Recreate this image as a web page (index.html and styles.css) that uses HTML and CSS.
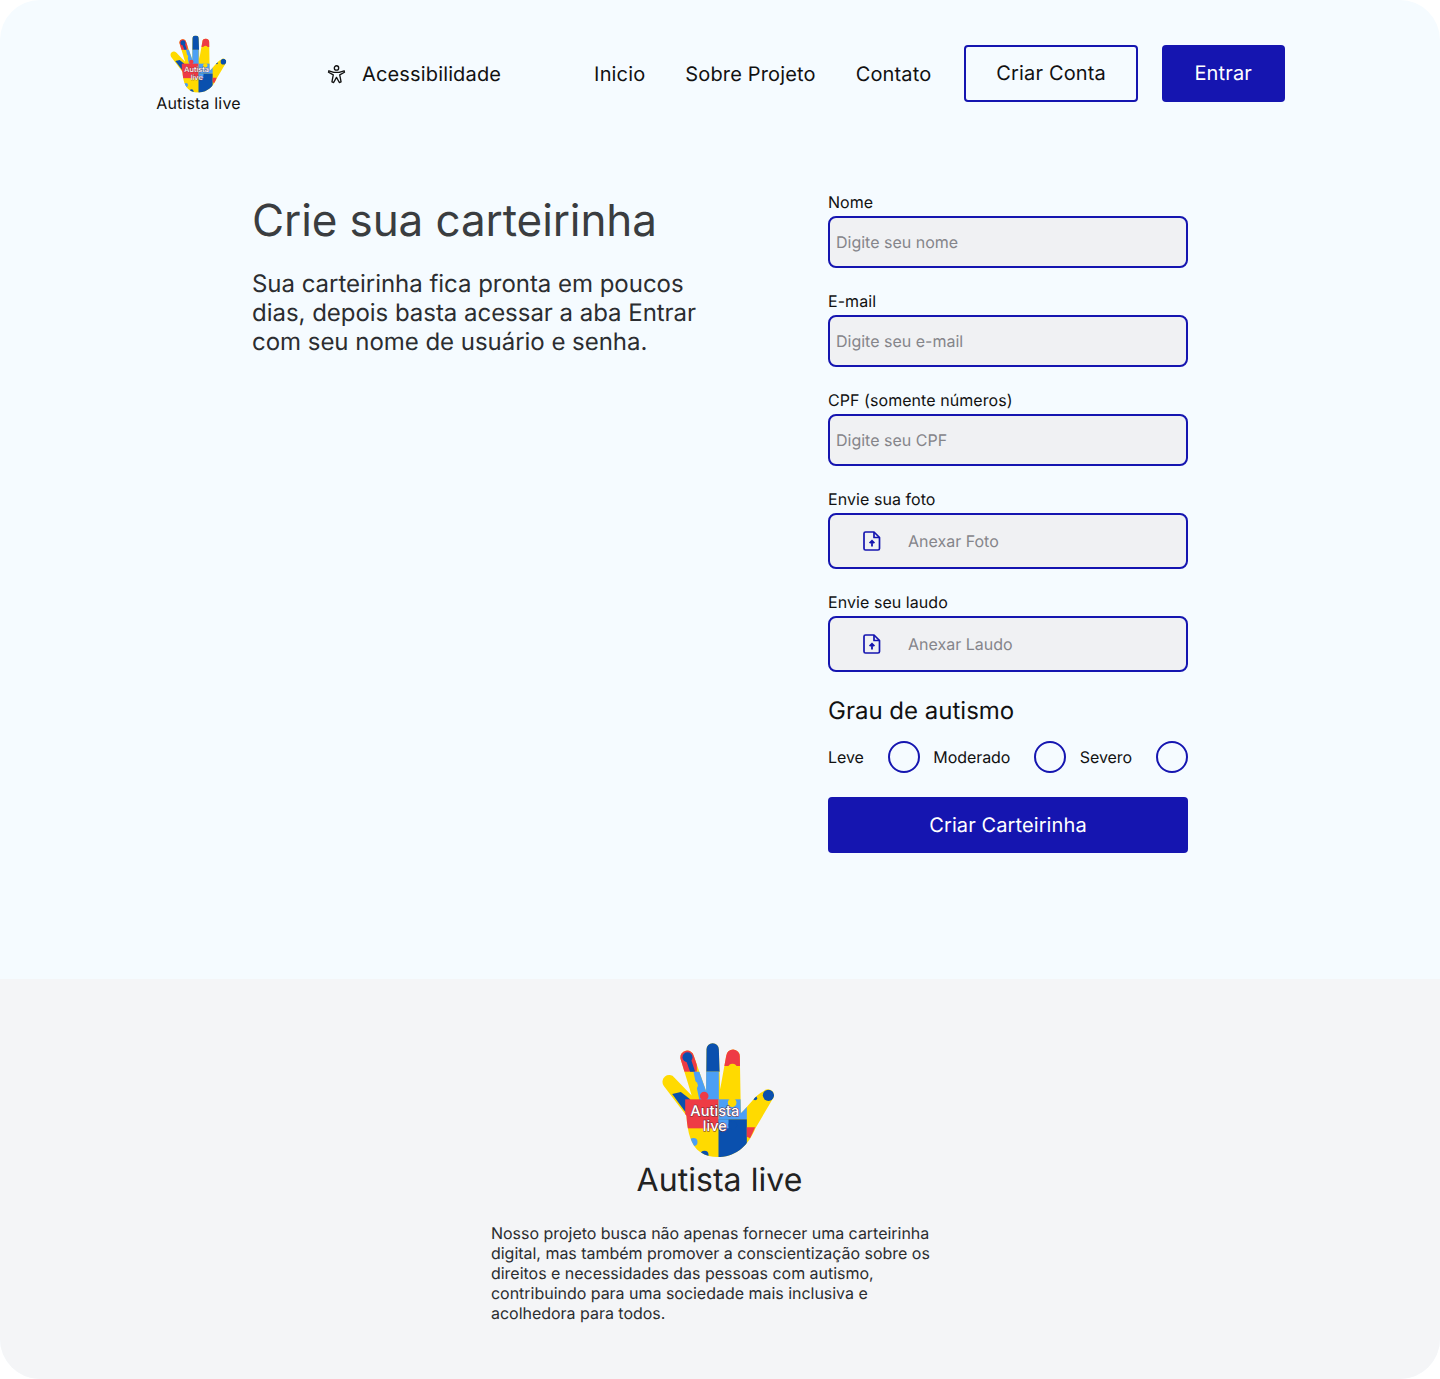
FILE: index.html
```html
<!DOCTYPE html>
<html lang="pt-BR">
<head>
<meta charset="utf-8">
<title>Autista live</title>
<link rel="stylesheet" href="styles.css">
</head>
<body>
<svg class="defs" width="0" height="0" aria-hidden="true">
  <defs>
    <clipPath id="handclip">
      <path d="M138 240 C140 300 150 345 180 366 C200 380 220 382 240 381 C290 378 325 345 345 296 L397 208 A16 16 0 0 0 370 184 C345 195 325 230 302 250 L299 80 A20.500 20.500 0 0 0 258 78 L240 178 L236 58 A18.500 18.500 0 0 0 199 58 L198 184 L161 78 A20 20 0 0 0 121 86 L160 215 Z"/>
      <path d="M71 168 A18 18 0 0 1 103 143 L172 215 L145 265 Z"/>
    </clipPath>
    <symbol id="hand" viewBox="66 36 338 348">
      <g clip-path="url(#handclip)">
        <rect x="60" y="30" width="350" height="360" fill="#ffda00"/>
        <rect x="110" y="55" width="60" height="70" fill="#ee3b45"/>
        <circle cx="142" cy="82" r="15" fill="#0a50ae"/>
        <path d="M135 85 L150 80 L165 125 L150 125 Z" fill="#0a50ae"/>
        <path d="M160 125 L200 125 L200 212 L178 212 Z" fill="#4c9ff5"/>
        <circle cx="160" cy="166" r="13" fill="#ffda00"/>
        <rect x="195" y="30" width="45" height="95" fill="#0a50ae"/>
        <rect x="198" y="125" width="38" height="85" fill="#4c9ff5"/>
        <rect x="250" y="50" width="55" height="58" fill="#ee3b45"/>
        <circle cx="277" cy="115" r="14" fill="#ffda00"/>
        <path d="M96 192 L122 186 L150 208 L150 245 L135 245 Z" fill="#0a50ae"/>
        <rect x="135" y="208" width="100" height="87" fill="#ee3b45"/>
        <circle cx="192" cy="198" r="13" fill="#ee3b45"/>
        <rect x="235" y="208" width="85" height="60" fill="#4c9ff5"/>
        <circle cx="276" cy="218" r="13" fill="#ffda00"/>
        <rect x="235" y="268" width="85" height="120" fill="#0a50ae"/>
        <rect x="235" y="268" width="30" height="27" fill="#4c9ff5"/>
        <circle cx="278" cy="285" r="13" fill="#0a50ae"/>
        <path d="M320 292 L345 292 L330 325 L320 320 Z" fill="#ee3b45"/>
        <circle cx="385" cy="196" r="17" fill="#0a50ae"/>
        <circle cx="345" cy="205" r="6" fill="#0a50ae"/>
        <circle cx="160" cy="336" r="12" fill="#4c9ff5"/>
        <circle cx="193" cy="374" r="12" fill="#0a50ae"/>
      </g>
      <text class="hand-text" x="224" y="258" text-anchor="middle">Autista</text>
      <text class="hand-text" x="224" y="304" text-anchor="middle">live</text>
    </symbol>
    <symbol id="file" viewBox="0 0 18 20">
      <path d="M2.500 1H11L16.500 6.500V17.500A1.500 1.500 0 0 1 15 19H2.500A1.500 1.500 0 0 1 1 17.500V2.500A1.500 1.500 0 0 1 2.500 1Z" fill="none" stroke="currentColor" stroke-width="1.700" stroke-linejoin="round"/>
      <path d="M11 1V6.500H16.500" fill="none" stroke="currentColor" stroke-width="1.700" stroke-linejoin="round"/>
      <path d="M9 15.500V10M6.600 12.200L9 9.800L11.400 12.200" fill="none" stroke="currentColor" stroke-width="1.800"/>
    </symbol>
  </defs>
</svg>
<div class="page">
  <header class="header">
    <a class="brand">
      <svg class="brand-hand"><use href="#hand"/></svg>
      <span class="brand-name">Autista live</span>
    </a>
    <a class="a11y">
      <svg class="a11y-icon" viewBox="0 0 20 20" fill="none" stroke="currentColor" stroke-width="1.400" stroke-linejoin="round" stroke-linecap="round">
        <circle cx="10" cy="3.600" r="2.300"/>
        <path d="M2 6.600L7.200 8.200H12.800L18 6.600L18.400 8.200L13.400 11L14.800 18.400L13 19L10 13.600L7 19L5.200 18.400L6.600 11L1.600 8.200Z"/>
      </svg>
      <span>Acessibilidade</span>
    </a>
    <nav class="nav">
      <a>Inicio</a>
      <a>Sobre Projeto</a>
      <a>Contato</a>
    </nav>
    <a class="btn btn-outline">Criar Conta</a>
    <a class="btn btn-solid">Entrar</a>
  </header>
  <main class="main">
    <section class="intro">
      <h1 class="intro-title">Crie sua carteirinha</h1>
      <p class="intro-text">Sua carteirinha fica pronta em poucos dias, depois basta acessar a aba Entrar com seu nome de usuário e senha.</p>
    </section>
    <form class="form">
      <label class="field"><span class="field-label">Nome</span><input class="input" type="text" placeholder="Digite seu nome"></label>
      <label class="field"><span class="field-label">E-mail</span><input class="input" type="text" placeholder="Digite seu e-mail"></label>
      <label class="field"><span class="field-label">CPF (somente números)</span><input class="input" type="text" placeholder="Digite seu CPF"></label>
      <div class="field"><span class="field-label">Envie sua foto</span><div class="attach"><svg class="attach-icon"><use href="#file"/></svg><span>Anexar Foto</span></div></div>
      <div class="field"><span class="field-label">Envie seu laudo</span><div class="attach"><svg class="attach-icon"><use href="#file"/></svg><span>Anexar Laudo</span></div></div>
      <h2 class="degree-title">Grau de autismo</h2>
      <div class="degree">
        <div class="degree-option"><span>Leve</span><span class="radio"></span></div>
        <div class="degree-option"><span>Moderado</span><span class="radio"></span></div>
        <div class="degree-option"><span>Severo</span><span class="radio"></span></div>
      </div>
      <a class="submit">Criar Carteirinha</a>
    </form>
  </main>
  <footer class="footer">
    <div class="footer-inner">
      <svg class="footer-hand"><use href="#hand"/></svg>
      <div class="footer-name">Autista live</div>
      <p class="footer-text">Nosso projeto busca não apenas fornecer uma carteirinha digital, mas também promover a conscientização sobre os direitos e necessidades das pessoas com autismo, contribuindo para uma sociedade mais inclusiva e acolhedora para todos.</p>
    </div>
  </footer>
</div>
</body>
</html>
```
FILE: styles.css
```css
* { box-sizing: border-box; }
html, body { margin: 0; padding: 0; background: #fff; }
body { font-family: Inter, "Liberation Sans", sans-serif; color: #111; text-rendering: geometricPrecision; }
.defs { position: absolute; }
.page { width: 1440px; height: 1379px; border-radius: 40px; overflow: hidden; background: #f5fbff; display: flex; flex-direction: column; }

.header { display: flex; align-items: center; padding: 35px 0 0 156px; height: 113px; font-size: 20px; letter-spacing: .15px; }
.brand { display: flex; flex-direction: column; align-items: center; width: 85px; }
.brand-hand { width: 57px; height: 58px; }
.brand-name { font-size: 16px; line-height: 20px; }
.a11y { display: flex; align-items: center; gap: 16px; margin-left: 86px; }
.a11y-icon { width: 19px; height: 20px; }
.nav { display: flex; gap: 40px; margin-left: 93px; }
.btn { display: flex; align-items: center; height: 57px; margin-bottom: 2px; border-radius: 4px; }
.btn-outline { margin-left: 33px; padding: 0 30px; border: 2px solid #1515b0; }
.btn-solid { margin-left: 24px; padding: 0 32.5px; background: #1515b0; color: #fff; }

.main { display: flex; padding: 80px 0 0 252px; flex: 1; }
.intro { width: 576px; }
.intro-title { margin: 0; font-size: 44px; line-height: 54px; font-weight: 400; letter-spacing: -.1px; color: #3a3d40; }
.intro-text { margin: 22px 0 0; width: 460px; font-size: 24px; line-height: 29px; letter-spacing: -.03px; color: #2b2d30; }
.form { width: 360px; display: flex; flex-direction: column; }
.field { display: flex; flex-direction: column; gap: 4px; margin-bottom: 24px; }
.field-label { font-size: 16px; line-height: 19px; letter-spacing: .06px; }
.input { height: 52px; padding: 0 6px; border: 2px solid #1515b0; border-radius: 8px; background: #f0f1f3; font: 16px Inter, sans-serif; text-rendering: geometricPrecision; outline: none; }
.input::placeholder { color: #85858a; opacity: 1; }
.attach { display: flex; align-items: center; height: 56px; padding-left: 33px; gap: 27px; border: 2px solid #1515b0; border-radius: 8px; background: #f0f1f3; font-size: 16px; color: #85858a; }
.attach-icon { width: 18px; height: 20px; color: #1515b0; }
.degree-title { margin: 0 0 16px; font-size: 24px; line-height: 29px; font-weight: 400; }
.degree { display: flex; justify-content: space-between; margin-bottom: 24px; font-size: 16px; letter-spacing: -.06px; }
.degree-option { display: flex; align-items: center; gap: 24px; }
.radio { width: 32px; height: 32px; border: 2px solid #1515b0; border-radius: 50%; }
.submit { display: flex; align-items: center; justify-content: center; height: 56px; border-radius: 4px; background: #1515b0; color: #fff; font-size: 20px; letter-spacing: .1px; }

.footer { height: 400px; background: #f4f5f7; padding: 63px 0 0 491px; }
.footer-inner { width: 458px; display: flex; flex-direction: column; align-items: center; }
.footer-hand { width: 113px; height: 116px; margin-right: 3px; }
.footer-name { margin-top: 2px; padding-right: 1px; font-size: 32px; line-height: 39px; letter-spacing: .05px; color: #222; }
.footer-text { margin: 24px 0 0; font-size: 16px; line-height: 20px; letter-spacing: -.025px; color: #2b2d30; }
.hand-text { font-family: Inter, sans-serif; font-size: 44px; font-weight: 500; letter-spacing: 0; fill: #fff; stroke: #6a2a38; stroke-width: 3; paint-order: stroke; }
```
